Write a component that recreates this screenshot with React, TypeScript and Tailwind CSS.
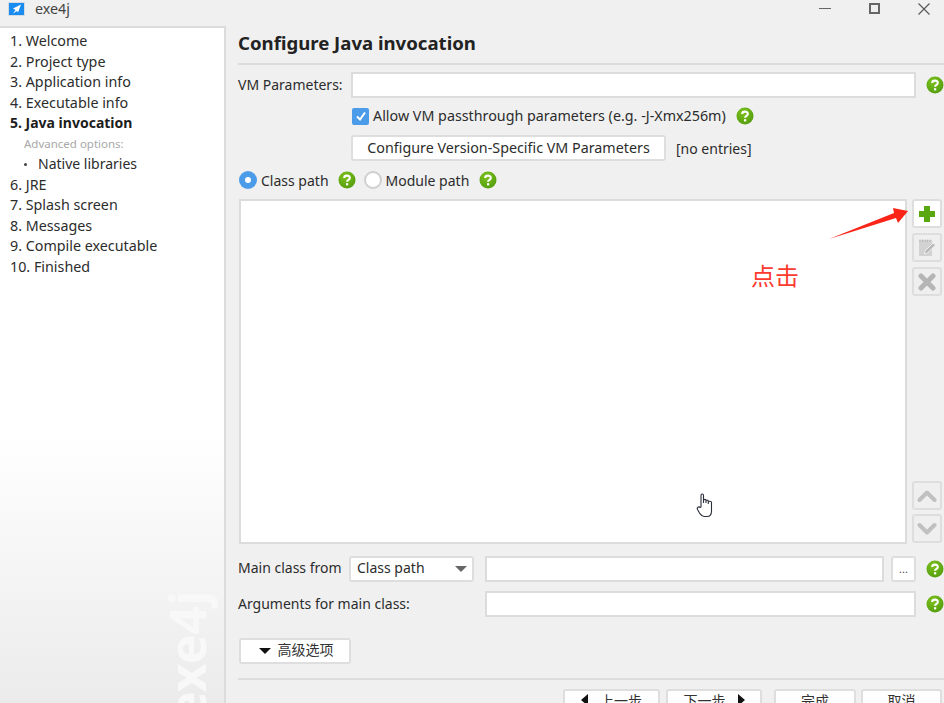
import React from "react";

const Help = () => (
  <svg width="18" height="18" viewBox="0 0 18 18" className="shrink-0">
    <defs>
      <radialGradient id="hg" cx="40%" cy="30%" r="80%">
        <stop offset="0%" stopColor="#7fc21f" />
        <stop offset="100%" stopColor="#4f9a0c" />
      </radialGradient>
    </defs>
    <circle cx="9" cy="9" r="8.5" fill="url(#hg)" />
    <path d="M6.2 7 C6.2 3.9 11.8 3.9 11.8 6.9 C11.8 8.9 9.1 8.8 9.1 10.8" fill="none" stroke="#fff" strokeWidth="2.1" />
    <rect x="8" y="12.2" width="2.2" height="2.2" fill="#fff" />
  </svg>
);

const Field = ({ className }: { className: string }) => (
  <div className={"h-[26px] shrink-0 bg-white border-2 border-[#dcdcdc] " + className} />
);

const SideBtn = ({ active, children }: { active?: boolean; children: React.ReactNode }) => (
  <div className={"w-[30px] h-[29px] shrink-0 rounded-[3px] border-2 border-[#dedede] flex items-center justify-center " + (active ? "bg-white" : "bg-[#efefef]")}>
    {children}
  </div>
);

const steps = ["1. Welcome", "2. Project type", "3. Application info", "4. Executable info"];
const steps2 = ["6. JRE", "7. Splash screen", "8. Messages", "9. Compile executable", "10. Finished"];
const row = "h-[20.5px] leading-[20.5px] whitespace-nowrap";

const BottomBtn = ({ w, children, ml }: { w: string; children: React.ReactNode; ml: string }) => (
  <div className={"h-[22px] shrink-0 bg-white rounded-[3px] border-2 border-[#dedede] flex items-center justify-center gap-[12px] text-[14px] text-[#333] " + w + " " + ml}>
    {children}
  </div>
);

export default function App() {
  return (
    <div
      className="relative w-[944px] h-[703px] overflow-hidden bg-[#f0f0f0] flex flex-col text-[14.3px] text-[#2c2c2c]"
      style={{ fontFamily: '"Noto Sans", "Noto Sans CJK SC", sans-serif' }}
    >
      <div className="h-[26px] shrink-0 flex items-center pl-[8px] pb-[9px]">
        <svg width="17" height="14" viewBox="0 0 17 14" className="mr-[10px]">
          <rect x="0.5" y="0.5" width="16" height="13" fill="#1a8cf0" stroke="#d4dbe2" />
          <path d="M13 2.5 L5 6.5 L7.5 8 L5 11.5 L9 9 L10 10.5 Z" fill="#fff" />
        </svg>
        <span className="text-[#444]">exe4j</span>
        <div className="ml-auto flex items-center">
          <div className="w-[12px] h-[1px] bg-[#666] mr-[38px]" />
          <div className="w-[11px] h-[11px] border-2 border-[#666] mr-[38px]" />
          <svg width="12" height="12" viewBox="0 0 12 12" className="mr-[14px]">
            <path d="M0.5 0.5 L11.5 11.5 M11.5 0.5 L0.5 11.5" stroke="#555" strokeWidth="1.1" />
          </svg>
        </div>
      </div>

      <div className="flex flex-1 min-h-0">
        <aside className="relative w-[226px] shrink-0 overflow-hidden border-r-2 border-t-2 border-[#dcdcdc] pt-[3px] pl-[10px] bg-gradient-to-b from-white from-60% to-[#ebebeb]">
          {steps.map((s) => (
            <div key={s} className={row}>{s}</div>
          ))}
          <div className={row + " font-bold text-[14px] text-[#1c1c1c]"}>5. Java invocation</div>
          <div className={row + " pl-[14px] text-[11.5px] text-[#a8a8a8]"}>Advanced options:</div>
          <div className={row + " flex items-center text-[14px]"}>
            <span className="w-[3px] h-[3px] rounded-full bg-[#444] ml-[14px] mr-[11px]" />
            Native libraries
          </div>
          {steps2.map((s) => (
            <div key={s} className={row}>{s}</div>
          ))}
          <div className="absolute left-[112px] top-[588px] h-[60px] w-[150px] -rotate-90 font-bold text-[50px] leading-[60px] text-[#f8f8f8] whitespace-nowrap">
            exe4j
          </div>
        </aside>

        <main className="flex-1 min-w-0 min-h-0 overflow-hidden pl-[12px] flex flex-col">
          <h1 className="h-[38px] shrink-0 mt-[1px] pb-[4px] flex items-center font-bold text-[18.6px] text-[#222] border-b-2 border-[#dcdcdc]">
            Configure Java invocation
          </h1>
          <div className="flex items-center mt-[7px] h-[26px] shrink-0">
            <span className="w-[113px] shrink-0 pb-[2px] text-[14px] whitespace-nowrap">VM Parameters:</span>
            <Field className="w-[565px]" />
            <div className="ml-[10px]"><Help /></div>
          </div>
          <div className="flex items-center ml-[114px] mt-[6px] h-[24px] shrink-0">
            <span className="w-[17px] h-[17px] rounded-[2px] bg-[#4c9be8] flex items-center justify-center mr-[4px]">
              <svg width="12" height="12" viewBox="0 0 12 12"><path d="M2 6.5 L5 9.5 L10 2.5" fill="none" stroke="#fff" strokeWidth="2" /></svg>
            </span>
            <span className="whitespace-nowrap mr-[10px]">Allow VM passthrough parameters (e.g. -J-Xmx256m)</span>
            <Help />
          </div>
          <div className="flex items-center ml-[113px] mt-[7px] h-[26px] shrink-0">
            <div className="w-[315px] h-[26px] bg-white rounded-[3px] border-2 border-[#dedede] flex items-center justify-center whitespace-nowrap">
              Configure Version-Specific VM Parameters
            </div>
            <span className="ml-[10px] text-[14px] whitespace-nowrap">[no entries]</span>
          </div>
          <div className="flex items-center ml-[1px] mt-[7px] h-[24px] shrink-0 text-[14px]">
            <span className="w-[18px] h-[18px] rounded-full bg-[#4c9be8] flex items-center justify-center mr-[4px]">
              <span className="w-[6px] h-[6px] rounded-full bg-white" />
            </span>
            <span className="mr-[9px] whitespace-nowrap">Class path</span>
            <Help />
            <span className="w-[18px] h-[18px] rounded-full bg-white border-2 border-[#cfcfcf] ml-[8px] mr-[4px]" />
            <span className="mr-[10px] whitespace-nowrap">Module path</span>
            <Help />
          </div>
          <div className="flex mt-[7px] h-[345px] shrink-0 ml-[1px]">
            <div className="w-[668px] h-full shrink-0 bg-white border-2 border-[#dcdcdc]" />
            <div className="ml-[5px] pb-[1px] flex flex-col">
              <SideBtn active>
                <svg width="18" height="18" viewBox="0 0 18 18"><path d="M9 1 V17 M1 9 H17" stroke="#5aa80f" strokeWidth="6" /></svg>
              </SideBtn>
              <div className="h-[5px]" />
              <SideBtn>
                <svg width="20" height="20" viewBox="0 0 20 20">
                  <rect x="2" y="2" width="13" height="16" fill="#d2d2d2" />
                  <path d="M3 1.5 V4 M5.5 1.5 V4 M8 1.5 V4 M10.5 1.5 V4 M13 1.5 V4" stroke="#b9b9b9" />
                  <path d="M8 13 L16 5 L18.5 7 L10.5 15 L7.5 16 Z" fill="#b8b8b8" stroke="#efefef" />
                </svg>
              </SideBtn>
              <div className="h-[5px]" />
              <SideBtn>
                <svg width="18" height="18" viewBox="0 0 18 18"><path d="M3 3 L15 15 M15 3 L3 15" stroke="#b5b5b5" strokeWidth="5" strokeLinecap="round" /></svg>
              </SideBtn>
              <div className="mt-auto" />
              <SideBtn>
                <svg width="20" height="14" viewBox="0 0 20 14"><path d="M2.5 11 L10 3.5 L17.5 11" fill="none" stroke="#c0c0c0" strokeWidth="4" strokeLinecap="round" strokeLinejoin="round" /></svg>
              </SideBtn>
              <div className="h-[4px]" />
              <SideBtn>
                <svg width="20" height="14" viewBox="0 0 20 14"><path d="M2.5 3 L10 10.5 L17.5 3" fill="none" stroke="#c0c0c0" strokeWidth="4" strokeLinecap="round" strokeLinejoin="round" /></svg>
              </SideBtn>
            </div>
          </div>
          <div className="flex items-center mt-[12px] h-[26px] shrink-0 text-[14px]">
            <span className="w-[111px] shrink-0 pb-[3px] whitespace-nowrap">Main class from</span>
            <div className="w-[125px] shrink-0 h-[26px] bg-white rounded-[3px] border-2 border-[#dedede] flex items-center justify-between pl-[6px] pr-[5px]">
              <span className="whitespace-nowrap pb-[3px]">Class path</span>
              <span className="w-0 h-0 border-l-[6px] border-r-[6px] border-t-[6px] border-l-transparent border-r-transparent border-t-[#666]" />
            </div>
            <Field className="w-[399px] ml-[11px]" />
            <div className="w-[25px] shrink-0 h-[26px] ml-[7px] bg-white rounded-[3px] border-2 border-[#dedede] flex items-center justify-center text-[11px] text-[#555] leading-none pb-[2px]">...</div>
            <div className="ml-[10px]"><Help /></div>
          </div>
          <div className="flex items-center mt-[9px] h-[26px] shrink-0 text-[14px]">
            <span className="w-[247px] shrink-0 pb-[2px] whitespace-nowrap">Arguments for main class:</span>
            <Field className="w-[431px]" />
            <div className="ml-[10px]"><Help /></div>
          </div>
          <div className="ml-[1px] mt-[21px] w-[112px] h-[26px] shrink-0 bg-white rounded-[3px] border-2 border-[#dedede] flex items-center justify-center pl-[2px] gap-[7px] text-[14px] text-[#333]">
            <span className="w-0 h-0 border-l-[6.5px] border-r-[6.5px] border-t-[6px] border-l-transparent border-r-transparent border-t-[#111]" />
            <span className="pb-[3px]">高级选项</span>
          </div>
          <div className="mt-[14px] h-[2px] bg-[#dcdcdc] shrink-0" />
          <div className="flex mt-[9px] shrink-0">
            <BottomBtn w="w-[97px]" ml="ml-[325px]">
              <span className="w-0 h-0 border-y-[6px] border-r-[7px] border-y-transparent border-r-[#111]" />
              上一步
            </BottomBtn>
            <BottomBtn w="w-[96px]" ml="ml-[6px]">
              下一步
              <span className="w-0 h-0 border-y-[6px] border-l-[7px] border-y-transparent border-l-[#111]" />
            </BottomBtn>
            <BottomBtn w="w-[82px]" ml="ml-[12px]">完成</BottomBtn>
            <BottomBtn w="w-[81px]" ml="ml-[5px]">取消</BottomBtn>
          </div>
        </main>
      </div>

      {/* annotations over the window */}
      <svg width="84" height="44" viewBox="0 0 84 44" className="absolute left-[828px] top-[198px]">
        <path d="M1 41 L66 15 L65 10 L80 13 L70 25 L68 20 Z" fill="#fb2418" />
      </svg>
      <span className="absolute left-[751px] top-[261px] text-[24px] leading-[30px] text-[#fb3a30]">点击</span>
      <svg width="18" height="25" viewBox="0 0 18 25" className="absolute left-[696px] top-[493px]">
        <path d="M5 14 V2.5 C5 0.5 7.5 0.5 7.5 2.5 V10 V7.5 C7.5 6 10 6 10 7.5 V10 V8 C10 6.7 12.3 6.7 12.3 8 V11 V9 C12.3 8 15.5 8 15.5 9.5 V18 C15.5 21 14 23.5 11 23.5 H8 C6 23.5 5 22 3.5 20 L1.5 16.5 C0.5 14.5 3 13 4 14.5 Z" fill="#fff" stroke="#2a2f3a" strokeWidth="1.1" />
      </svg>
    </div>
  );
}
